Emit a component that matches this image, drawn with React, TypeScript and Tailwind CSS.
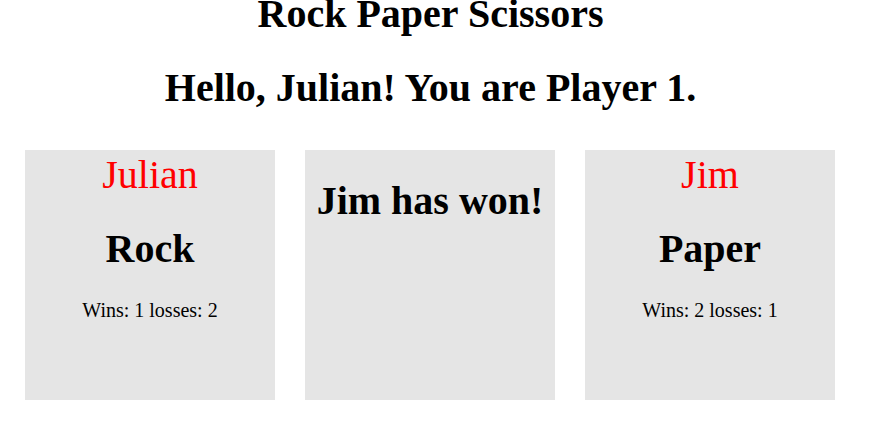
type PlayerProps = {
    name: string;
    choice: string;
    wins: number;
    losses: number;
};

function PlayerCard({ name, choice, wins, losses }: PlayerProps) {
    return (
        <div className="w-[250px] h-[250px] bg-[#e5e5e5] flex flex-col items-center text-center pt-[2px]">
            <p className="text-[40px] leading-[46px] text-[#ff0000]">{name}</p>
            <h2 className="mt-[28px] text-[40px] leading-[46px] font-bold text-black">{choice}</h2>
            <p className="mt-[27px] text-[20px] leading-[23px] text-black">
                Wins: {wins} losses: {losses}
            </p>
        </div>
    );
}

export default function App() {
    return (
        <div className="w-[869px] h-[422px] bg-white overflow-hidden" style={{ fontFamily: '"Liberation Serif", "Times New Roman", serif' }}>
            <div className="w-[861px] text-center text-black">
                <h1 className="text-[40px] leading-[28px] font-bold">Rock Paper Scissors</h1>
                <h2 className="mt-[37px] text-[40px] leading-[46px] font-bold">Hello, Julian! You are Player 1.</h2>
            </div>

            <div className="mt-[39px] pl-[25px] flex gap-[30px]">
                <PlayerCard name="Julian" choice="Rock" wins={1} losses={2} />

                <div className="w-[250px] h-[250px] bg-[#e5e5e5] text-center pt-[28px]">
                    <h2 className="text-[40px] leading-[46px] font-bold text-black">Jim has won!</h2>
                </div>

                <PlayerCard name="Jim" choice="Paper" wins={2} losses={1} />
            </div>
        </div>
    );
}
